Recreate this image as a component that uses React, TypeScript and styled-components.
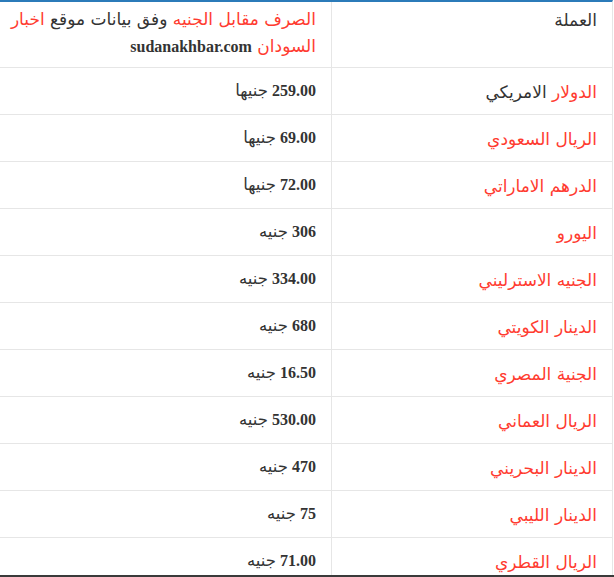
import React from "react";
import styled, { createGlobalStyle } from "styled-components";

const Global = createGlobalStyle`
  html, body { margin: 0; padding: 0; background: #fff; }
  body { overflow: hidden; }
`;

const Page = styled.div`
  width: 614px;
  height: 577px;
  overflow: hidden;
  display: flex;
  flex-direction: column;
`;

const TableWrap = styled.div`
  flex: 1;
  min-height: 0;
  overflow: hidden;
`;

const Table = styled.div`
  direction: rtl;
  width: 612px;
  border-top: 2px solid #2b7bb9;
  border-right: 1px solid #e6e6e6;
  display: grid;
  grid-template-columns: 281px 331px;
`;

const Cell = styled.div<{ $head?: boolean; $side?: "name" | "value" }>`
  height: ${(p) => (p.$head ? "63px" : "46px")};
  border-bottom: 1px solid #e6e6e6;
  border-left: ${(p) => (p.$side === "name" ? "1px solid #e6e6e6" : "none")};
  padding: ${(p) => (p.$head ? "2px 15px 0 6px" : "0 15px")};
  box-sizing: content-box;
  display: flex;
  align-items: ${(p) => (p.$head ? "flex-start" : "center")};
  text-align: right;
`;

const NameText = styled.div<{ $head?: boolean }>`
  font-family: "DejaVu Sans", Tahoma, sans-serif;
  font-size: 17px;
  color: #333;
  padding-top: ${(p) => (p.$head ? "3px" : "2px")};
  line-height: 26px;
`;

const HeadNote = styled.div`
  font-family: "DejaVu Sans", Tahoma, sans-serif;
  font-size: 17px;
  line-height: 27px;
  color: #333;
  padding-top: 2px;
`;

const Red = styled.span`
  color: #ff3b30;
`;

const Site = styled.span`
  font-family: "Liberation Serif", "Times New Roman", serif;
  font-weight: bold;
  font-size: 16px;
  color: #333;
`;

const ValueText = styled.div`
  font-family: "Liberation Serif", "Times New Roman", serif;
  font-weight: bold;
  font-size: 16px;
  color: #333;
  line-height: 22px;
`;

const Unit = styled.span`
  font-family: "DejaVu Sans", serif;
  font-weight: normal;
  font-size: 16.5px;
`;

const BottomBar = styled.div`
  height: 2px;
  background: #3a3a3a;
  flex: none;
`;

type Row = { name: React.ReactNode; num: string; unit: string };

const rows: Row[] = [
  { name: <><Red>الدولار</Red> الامريكي</>, num: "259.00", unit: "جنيها" },
  { name: <Red>الريال السعودي</Red>, num: "69.00", unit: "جنيها" },
  { name: <Red>الدرهم الاماراتي</Red>, num: "72.00", unit: "جنيها" },
  { name: <Red>اليورو</Red>, num: "306", unit: "جنيه" },
  { name: <Red>الجنيه الاسترليني</Red>, num: "334.00", unit: "جنيه" },
  { name: <Red>الدينار الكويتي</Red>, num: "680", unit: "جنيه" },
  { name: <Red>الجنية المصري</Red>, num: "16.50", unit: "جنيه" },
  { name: <Red>الريال العماني</Red>, num: "530.00", unit: "جنيه" },
  { name: <Red>الدينار البحريني</Red>, num: "470", unit: "جنيه" },
  { name: <Red>الدينار الليبي</Red>, num: "75", unit: "جنيه" },
  { name: <Red>الريال القطري</Red>, num: "71.00", unit: "جنيه" },
];

export default function App() {
  return (
    <Page>
      <Global />
      <TableWrap>
        <Table>
          <Cell $head $side="name">
            <NameText $head>العملة</NameText>
          </Cell>
          <Cell $head $side="value">
            <HeadNote>
              <Red>الصرف مقابل الجنيه</Red> وفق بيانات موقع <Red>اخبار السودان</Red>{" "}
              <Site>sudanakhbar.com</Site>
            </HeadNote>
          </Cell>
          {rows.map((r, i) => (
            <React.Fragment key={i}>
              <Cell $side="name">
                <NameText>{r.name}</NameText>
              </Cell>
              <Cell $side="value">
                <ValueText>
                  {r.num} <Unit>{r.unit}</Unit>
                </ValueText>
              </Cell>
            </React.Fragment>
          ))}
        </Table>
      </TableWrap>
      <BottomBar />
    </Page>
  );
}
